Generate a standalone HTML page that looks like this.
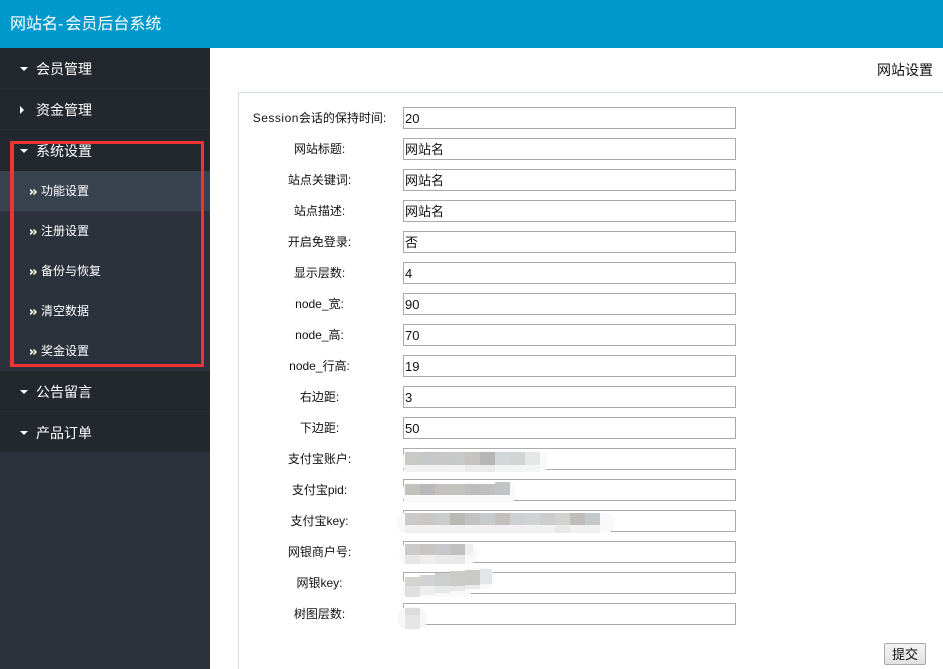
<!DOCTYPE html>
<html><head><meta charset="utf-8"><style>
*{box-sizing:border-box}
html,body{margin:0;padding:0;background:#fff;width:943px;height:669px;overflow:hidden}
body{position:relative;font-family:"Liberation Sans","WenQuanYi Zen Hei","Noto Sans CJK SC",sans-serif;font-size:12px;color:#111}
#w{position:absolute;left:0;top:0;width:943px;height:669px;overflow:hidden}
.a{position:absolute}
.top{left:0;top:0;width:943px;height:48px;background:#0099cc;color:#fff;font-size:16px;line-height:50px;padding-left:10px}
.top span{letter-spacing:2px}
.side{left:0;top:48px;width:210px;height:621px;background:#2b323b}
.m{position:absolute;left:0;width:210px;height:41px;background:#23272e;border-bottom:1px solid #2b2f37;color:#fff;font-size:14px;line-height:42px;padding-left:36px}
.d{position:absolute;left:20px;top:19px;width:0;height:0;border-left:4px solid transparent;border-right:4px solid transparent;border-top:4px solid #fff}
.r{position:absolute;left:20px;top:17px;width:0;height:0;border-top:4px solid transparent;border-bottom:4px solid transparent;border-left:4px solid #fff}
.s{position:absolute;left:0;width:210px;height:40px;color:#fff;font-size:12px;line-height:40px;padding-left:41px}
.s svg{position:absolute;left:30px;top:18px}
.box{left:10px;top:141px;width:194px;height:226px;border:3px solid #f33333;border-left-width:4px}
.fs{left:238px;top:92px;width:720px;height:600px;border:1px solid #cfe0e8}
.l{position:absolute;left:240px;width:159px;text-align:center;height:22px;line-height:23px;font-size:12px;color:#111}
.l span{letter-spacing:.5px}
.i{position:absolute;left:403px;width:333px;height:22px;border:1px solid #aaa;background:#fff;font-size:13px;line-height:22px;padding-left:1px;color:#111}
.btn{left:884px;top:643px;width:42px;height:22px;border:1px solid #a8a8a8;border-radius:2px;background:linear-gradient(#f3f3f3,#e2e2e2);font-size:13px;line-height:21px;text-align:center;color:#111}
</style></head><body><div id="w">
<div class="a top">网站名<span>-</span>会员后台系统</div>
<div class="a side"></div>
<div class="m" style="top:48px"><i class="d"></i>会员管理</div>
<div class="m" style="top:89px"><i class="r"></i>资金管理</div>
<div class="m" style="top:130px;border-bottom:0"><i class="d"></i>系统设置</div>
<div class="s" style="top:171px;background:#39434f"><svg width="7" height="6"><path d="M0 0.5L2.5 3L0 5.5M3.5 0.5L6 3L3.5 5.5" fill="none" stroke="#fffbe0" stroke-width="1.6"/></svg>功能设置</div>
<div class="s" style="top:211px"><svg width="7" height="6"><path d="M0 0.5L2.5 3L0 5.5M3.5 0.5L6 3L3.5 5.5" fill="none" stroke="#fffbe0" stroke-width="1.6"/></svg>注册设置</div>
<div class="s" style="top:251px"><svg width="7" height="6"><path d="M0 0.5L2.5 3L0 5.5M3.5 0.5L6 3L3.5 5.5" fill="none" stroke="#fffbe0" stroke-width="1.6"/></svg>备份与恢复</div>
<div class="s" style="top:291px"><svg width="7" height="6"><path d="M0 0.5L2.5 3L0 5.5M3.5 0.5L6 3L3.5 5.5" fill="none" stroke="#fffbe0" stroke-width="1.6"/></svg>清空数据</div>
<div class="s" style="top:331px"><svg width="7" height="6"><path d="M0 0.5L2.5 3L0 5.5M3.5 0.5L6 3L3.5 5.5" fill="none" stroke="#fffbe0" stroke-width="1.6"/></svg>奖金设置</div>
<div class="m" style="top:371px"><i class="d"></i>公告留言</div>
<div class="m" style="top:412px;height:40px;border-bottom:0"><i class="d"></i>产品订单</div>
<div class="a box"></div>

<div class="a" style="left:877px;top:61px;font-size:14px;line-height:18px;color:#111">网站设置</div>
<div class="a fs"></div>

<div class="l" style="top:107px"><span>Session</span>会话的保持时间:</div><div class="i" style="top:107px">20</div>
<div class="l" style="top:138px">网站标题:</div><div class="i" style="top:138px">网站名</div>
<div class="l" style="top:169px">站点关键词:</div><div class="i" style="top:169px">网站名</div>
<div class="l" style="top:200px">站点描述:</div><div class="i" style="top:200px">网站名</div>
<div class="l" style="top:231px">开启免登录:</div><div class="i" style="top:231px">否</div>
<div class="l" style="top:262px">显示层数:</div><div class="i" style="top:262px">4</div>
<div class="l" style="top:293px">node_宽:</div><div class="i" style="top:293px">90</div>
<div class="l" style="top:324px">node_高:</div><div class="i" style="top:324px">70</div>
<div class="l" style="top:355px">node_行高:</div><div class="i" style="top:355px">19</div>
<div class="l" style="top:386px">右边距:</div><div class="i" style="top:386px">3</div>
<div class="l" style="top:417px">下边距:</div><div class="i" style="top:417px">50</div>
<div class="l" style="top:448px">支付宝账户:</div><div class="i" style="top:448px"></div>
<div class="l" style="top:479px">支付宝pid:</div><div class="i" style="top:479px"></div>
<div class="l" style="top:510px">支付宝key:</div><div class="i" style="top:510px"></div>
<div class="l" style="top:541px">网银商户号:</div><div class="i" style="top:541px"></div>
<div class="l" style="top:572px">网银key:</div><div class="i" style="top:572px"></div>
<div class="l" style="top:603px">树图层数:</div><div class="i" style="top:603px"></div>

<svg class="a" style="left:0;top:0" width="943" height="669" shape-rendering="crispEdges">
<rect x="403" y="451" width="144" height="21" rx="6" fill="#f9f9f9"/>
<rect x="405" y="452" width="15" height="13" fill="#c9c9c5"/><rect x="420" y="452" width="15" height="13" fill="#c5c7c9"/><rect x="435" y="452" width="15" height="13" fill="#c8c8c8"/><rect x="450" y="452" width="15" height="13" fill="#c7cac9"/><rect x="465" y="452" width="15" height="13" fill="#c6c4c2"/><rect x="480" y="452" width="15" height="13" fill="#b6b6b6"/><rect x="495" y="452" width="15" height="13" fill="#d2d8d9"/><rect x="510" y="452" width="15" height="13" fill="#d3d5d4"/><rect x="525" y="452" width="15" height="13" fill="#e6e8e7"/>
<rect x="405" y="465" width="60" height="7" fill="#f2f2f2"/><rect x="465" y="465" width="30" height="7" fill="#ebebeb"/><rect x="495" y="465" width="45" height="7" fill="#f3f4f4"/>
<rect x="403" y="483" width="112" height="20" rx="6" fill="#f9f9f9"/>
<rect x="405" y="484" width="15" height="11" fill="#c2c2bd"/><rect x="420" y="484" width="15" height="11" fill="#b9b9bb"/><rect x="435" y="484" width="15" height="11" fill="#c4c1bf"/><rect x="450" y="484" width="15" height="11" fill="#c3c3bd"/><rect x="465" y="484" width="15" height="11" fill="#bebdbe"/><rect x="480" y="484" width="15" height="11" fill="#bfbfbf"/><rect x="495" y="482" width="15" height="13" fill="#bfc4c4"/>
<rect x="397" y="513" width="217" height="20" rx="8" fill="#f9f9f9"/>
<rect x="405" y="513" width="15" height="12" fill="#cbcac9"/><rect x="420" y="513" width="15" height="12" fill="#c8c7c6"/><rect x="435" y="513" width="15" height="12" fill="#c9cccc"/><rect x="450" y="513" width="15" height="12" fill="#b9b9b3"/><rect x="465" y="513" width="15" height="12" fill="#c2c2c3"/><rect x="480" y="513" width="15" height="12" fill="#c8cbcb"/><rect x="495" y="513" width="15" height="12" fill="#c3bfbc"/><rect x="510" y="513" width="15" height="12" fill="#ccd0d1"/><rect x="525" y="513" width="15" height="12" fill="#d0d3d3"/><rect x="540" y="513" width="15" height="12" fill="#cccccd"/><rect x="555" y="513" width="15" height="12" fill="#d2d2d1"/><rect x="570" y="513" width="15" height="12" fill="#bfbcbb"/><rect x="585" y="513" width="15" height="12" fill="#c3c8ca"/>
<rect x="405" y="525" width="195" height="8" fill="#f1f1f1"/><rect x="555" y="525" width="15" height="8" fill="#e8e8e8"/>
<rect x="399" y="544" width="78" height="20" rx="9" fill="#f9f9f9"/>
<rect x="405" y="544" width="15" height="11" fill="#cdcccb"/><rect x="420" y="544" width="15" height="11" fill="#c8c5c3"/><rect x="435" y="544" width="15" height="11" fill="#c6c7cb"/><rect x="450" y="544" width="15" height="11" fill="#c1c0bf"/><rect x="465" y="544" width="8" height="11" fill="#eef0f0"/>
<rect x="405" y="555" width="15" height="9" fill="#e7e7e7"/><rect x="420" y="555" width="15" height="9" fill="#eeeeec"/><rect x="435" y="555" width="30" height="9" fill="#e9e9ea"/>
<rect x="402" y="578" width="70" height="19" rx="8" fill="#f9f9f9"/><rect x="465" y="568" width="29" height="21" rx="9" fill="#f8f8f8"/>
<rect x="405" y="577" width="15" height="9" fill="#d6d4d1"/><rect x="420" y="575" width="15" height="11" fill="#d0d2d5"/><rect x="435" y="573" width="15" height="13" fill="#cdcfcf"/><rect x="450" y="571" width="15" height="15" fill="#cbcbc9"/><rect x="465" y="570" width="15" height="15" fill="#c9c9c8"/><rect x="480" y="569" width="12" height="15" fill="#e3e5e8"/>
<rect x="405" y="586" width="15" height="11" fill="#e0e0de"/><rect x="420" y="586" width="15" height="9" fill="#eeeeee"/><rect x="435" y="586" width="15" height="7" fill="#e6e7e7"/><rect x="450" y="586" width="15" height="5" fill="#e8e8e8"/><rect x="465" y="585" width="15" height="4" fill="#ebebeb"/>
<rect x="398" y="607" width="29" height="23" rx="10" fill="#f7f7f7"/>
<rect x="405" y="608" width="15" height="7" fill="#dcdcdc"/><rect x="405" y="615" width="15" height="14" fill="#e6e6e6"/>
</svg>

<div class="a btn">提交</div>
</div></body></html>
